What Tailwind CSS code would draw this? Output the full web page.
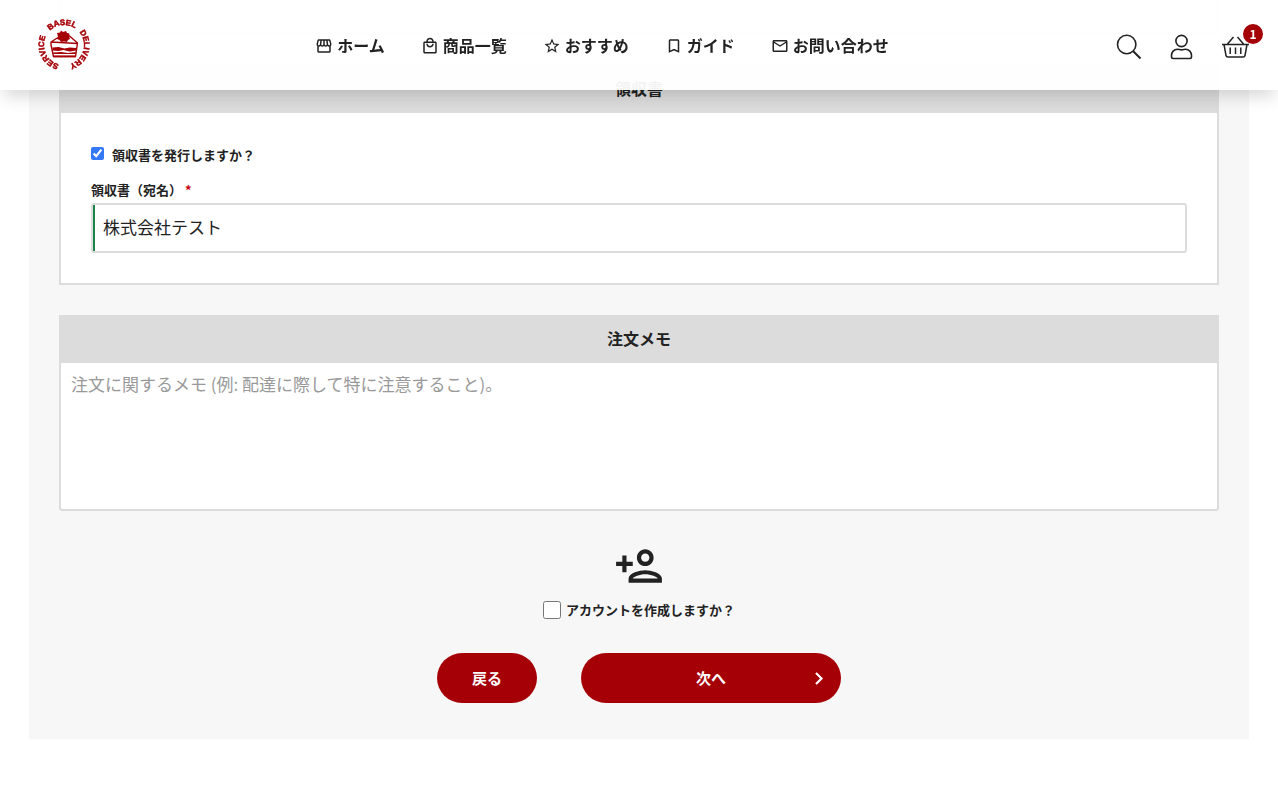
<!DOCTYPE html>
<html lang="ja">
<head>
  <meta charset="UTF-8">
  <meta name="viewport" content="width=device-width, initial-scale=1.0">
  <title>ご注文手続き - Basel Delivery Service</title>
  <script src="https://cdn.jsdelivr.net/npm/@tailwindcss/browser@4"></script>
</head>
<body class="bg-white text-[#222] font-['Noto_Sans_CJK_JP',sans-serif]">

  <header class="fixed inset-x-0 top-0 z-10 flex h-[90px] items-center justify-between bg-white/95 pl-[38px] pr-7 shadow-[0_10px_16px_-4px_rgba(0,0,0,0.16)]">
    <a href="#" aria-label="Basel Delivery Service">
      <svg class="size-[52px]" viewBox="0 0 52 52" fill="#a50006">
        <defs>
          <path id="ring" d="M26 46a20 20 0 0 1 0-40a20 20 0 0 1 0 40a20 20 0 0 1 0-40" />
        </defs>
        <g class="font-['Liberation_Sans',sans-serif] text-[8px] font-bold" stroke="#a50006" stroke-width=".5" text-anchor="middle">
          <text><textPath href="#ring" startOffset="60.5">BASEL</textPath></text>
          <text><textPath href="#ring" startOffset="99.5">DELIVERY</textPath></text>
          <text><textPath href="#ring" startOffset="22.5">SERVICE</textPath></text>
        </g>
        <path d="M19 14l3-.5 1-2 2 1.5 3-1 1 2 2.500.5-.5 2.500 1 3-2 1-1 2-3-.5-3 .5-1.500-2-2.500-1 1-2.500z" />
        <path d="M20 18.500l-7 4.500v3l2.500 11.500h22L39.500 24 31 16.500M13 23l26.500 1.500" fill="none" stroke="#a50006" stroke-width="1.400" stroke-linejoin="round" />
        <path d="M14.500 28.500l6-.5 6 1.500 5-1 7 .5v2.500l-7 1-6-1.500-5 1-6-.5zM15 33.500l8-.5 7 1 8-1-.5 2H15.500zM15.500 36.500h22v1.800h-22z" />
      </svg>
    </a>

    <nav class="flex items-center gap-9 text-base/6 font-bold">
      <a href="#" class="flex items-start gap-1">
        <svg class="mt-1 size-[18px]" viewBox="0 0 24 24" fill="currentColor"><path d="M21.900 8.890l-1.050-4.370c-.22-.9-1-1.520-1.910-1.520H5.050c-.9 0-1.690.63-1.900 1.520L2.100 8.890c-.24 1.020-.02 2.060.62 2.880.08.11.19.19.28.29V19c0 1.100.9 2 2 2h14c1.100 0 2-.9 2-2v-6.940c.09-.09.2-.18.28-.28.64-.82.87-1.870.62-2.890zm-2.990-3.900l1.050 4.370c.1.42.01.84-.25 1.170-.14.18-.44.47-.94.47-.61 0-1.140-.49-1.210-1.140L16.980 5l1.930-.01zM13 5h1.960l.54 4.520c.05.39-.07.78-.33 1.070-.22.26-.54.41-.95.41-.67 0-1.220-.59-1.220-1.310V5zM8.490 9.520L9.040 5H11v4.690c0 .72-.55 1.310-1.290 1.310-.34 0-.65-.15-.89-.41-.25-.29-.37-.68-.33-1.070zm-4.450-.16L5.050 5h1.970l-.58 4.860c-.08.65-.6 1.140-1.210 1.140-.49 0-.8-.29-.93-.47-.27-.32-.36-.75-.26-1.170zM5 19v-6.030c.08.01.15.03.23.03.87 0 1.660-.36 2.240-.95.6.6 1.400.95 2.310.95.87 0 1.650-.36 2.230-.93.59.57 1.390.93 2.290.93.84 0 1.640-.35 2.240-.95.58.59 1.370.95 2.240.95.08 0 .15-.02.23-.03V19H5z" /></svg>
        ホーム
      </a>
      <a href="#" class="flex items-start gap-1">
        <svg class="mt-1 size-[18px]" viewBox="0 0 24 24" fill="currentColor"><path d="M19 6h-2c0-2.760-2.240-5-5-5S7 3.240 7 6H5c-1.100 0-1.990.9-1.990 2L3 20c0 1.100.9 2 2 2h14c1.100 0 2-.9 2-2V8c0-1.100-.9-2-2-2zm-7-3c1.660 0 3 1.340 3 3H9c0-1.660 1.340-3 3-3zm7 17H5V8h14v12zm-7-8c-1.660 0-3-1.340-3-3H7c0 2.760 2.240 5 5 5s5-2.240 5-5h-2c0 1.660-1.340 3-3 3z" /></svg>
        商品一覧
      </a>
      <a href="#" class="flex items-start gap-1">
        <svg class="mt-1 size-[18px]" viewBox="0 0 24 24" fill="currentColor"><path d="M22 9.240l-7.190-.62L12 2 9.190 8.630 2 9.240l5.460 4.730L5.820 21 12 17.270 18.180 21l-1.630-7.030L22 9.240zM12 15.400l-3.760 2.270 1-4.280-3.320-2.880 4.380-.38L12 6.100l1.710 4.040 4.380.38-3.320 2.880 1 4.280L12 15.400z" /></svg>
        おすすめ
      </a>
      <a href="#" class="flex items-start gap-1">
        <svg class="mt-1 size-[18px]" viewBox="0 0 24 24" fill="currentColor"><path d="M17 3H7c-1.100 0-2 .9-2 2v16l7-3 7 3V5c0-1.100-.9-2-2-2zm0 15l-5-2.180L7 18V5h10v13z" /></svg>
        ガイド
      </a>
      <a href="#" class="flex items-start gap-1">
        <svg class="mt-1 size-[18px]" viewBox="0 0 24 24" fill="currentColor"><path d="M22 6c0-1.100-.9-2-2-2H4c-1.100 0-2 .9-2 2v12c0 1.100.9 2 2 2h16c1.100 0 2-.9 2-2V6zm-2 0l-8 5-8-5h16zm0 12H4V8l8 5 8-5v10z" /></svg>
        お問い合わせ
      </a>
    </nav>

    <div class="mt-1 flex items-center gap-[23px]">
      <button type="button" aria-label="検索">
        <svg class="size-[30px]" viewBox="0 0 30 30" fill="none" stroke="currentColor" stroke-width="1.600">
          <circle cx="12.700" cy="12.500" r="9.200" />
          <path d="M19 19l7.500 7.500" stroke-width="2" />
        </svg>
      </button>
      <a href="#" aria-label="マイアカウント">
        <svg class="size-[30px]" viewBox="0 0 30 30" fill="none" stroke="currentColor" stroke-width="1.600">
          <circle cx="14.500" cy="9" r="5.600" />
          <path d="M10.500 17.300c1.500 0 2 .6 4 .6s2.500-.6 4-.6c3.500 0 6 2.700 6 6.200v1.300c0 1-.8 1.700-1.700 1.700H6.200c-1 0-1.700-.8-1.700-1.700v-1.300c0-3.500 2.500-6.200 6-6.200z" />
        </svg>
      </a>
      <a href="#" aria-label="カート" class="relative">
        <svg class="size-[30px]" viewBox="0 0 30 30" fill="none" stroke="currentColor" stroke-width="1.500">
          <path d="M2 12.500h27M4 12.500l2 11q.3 1.500 1.800 1.500h15.400q1.500 0 1.800-1.500l2-11M7.500 12l6-7M23.500 12l-6-7M10.200 15.500v6.500M15.500 15.500v6.500M20.800 15.500v6.500" />
        </svg>
        <span class="absolute -top-2 left-[23px] flex size-5 items-center justify-center rounded-full bg-[#a50006] text-xs font-bold text-white">1</span>
      </a>
    </div>
  </header>

  <main class="px-[29px] pb-[57px]">
    <form class="bg-[#f7f7f7] px-[30px] pb-9">
      <div class="h-[35px] border-2 border-t-0 border-[#dcdcdc] bg-white"></div>

      <section class="mt-[30px]">
        <h2 class="bg-[#dcdcdc] pt-[11px] pb-[13px] text-center text-base/6 font-bold">領収書</h2>
        <div class="border-2 border-t-0 border-[#dcdcdc] bg-white px-[30px] pt-8 pb-[30px]">
          <label class="flex items-start gap-2 text-[13px]/5 font-bold">
            <input type="checkbox" checked class="mt-0.5 size-[13px] accent-[#3478f6]">
            領収書を発行しますか？
          </label>
          <label for="receipt-name" class="mt-[15px] block text-[13px]/5 font-bold">領収書（宛名） <span class="text-[#c8000f]">*</span></label>
          <div class="mt-[3px] flex h-[50px] rounded-[3px] border-2 border-[#dcdcdc]">
            <input id="receipt-name" type="text" value="株式会社テスト" class="w-full border-l-2 border-[#1e8449] px-2 pb-0.5 text-[17px] font-normal outline-none">
          </div>
        </div>
      </section>

      <section class="mt-[30px]">
        <h2 class="bg-[#dcdcdc] pt-[11px] pb-[13px] text-center text-base/6 font-bold"><label for="order-notes">注文メモ</label></h2>
        <textarea id="order-notes" placeholder="注文に関するメモ (例: 配達に際して特に注意すること)。" class="-mt-0.5 block h-[150px] w-full resize-none rounded-[3px] border-2 border-[#dcdcdc] bg-white px-2.5 py-[9px] text-[17px]/6 font-normal outline-none placeholder:text-[#999]"></textarea>
      </section>

      <div class="mt-[30px] flex flex-col items-center">
        <svg class="size-[50px]" viewBox="0 0 24 24" fill="currentColor"><path d="M15 12c2.210 0 4-1.790 4-4s-1.790-4-4-4-4 1.790-4 4 1.790 4 4 4zm0-6c1.100 0 2 .9 2 2s-.9 2-2 2-2-.9-2-2 .9-2 2-2zm0 8c-2.670 0-8 1.340-8 4v2h16v-2c0-2.660-5.330-4-8-4zm-6 4c.22-.72 3.310-2 6-2 2.700 0 5.800 1.290 6 2H9zm-3-3v-3h3v-2H6V7H4v3H1v2h3v3z" /></svg>
        <label class="mt-[9px] flex items-center gap-[5px] text-[13px]/5 font-bold">
          <input type="checkbox" class="size-[18px] accent-[#3478f6]">
          アカウントを作成しますか？
        </label>
      </div>

      <div class="mt-[33px] flex justify-center gap-11 text-[15px] font-bold text-white">
        <button type="button" class="h-[50px] w-[100px] rounded-full bg-[#a50006] hover:bg-[#8a0005]">戻る</button>
        <button type="submit" class="relative h-[50px] w-[260px] rounded-full bg-[#a50006] hover:bg-[#8a0005]">
          次へ
          <svg class="absolute top-4 right-[13px] size-[18px]" viewBox="0 0 18 18" fill="none" stroke="currentColor" stroke-width="2.200"><path d="M6 4l5.500 5.500L6 15" /></svg>
        </button>
      </div>
    </form>
  </main>

</body>
</html>
